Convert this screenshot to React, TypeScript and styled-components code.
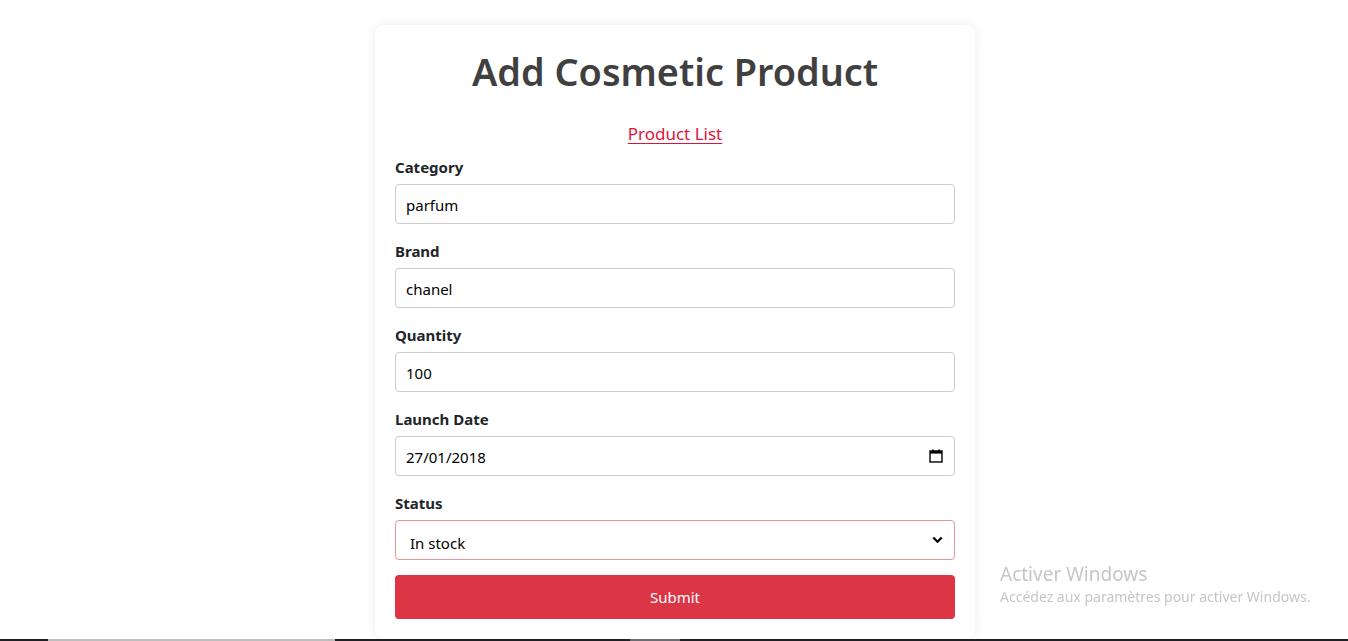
import styled, { createGlobalStyle } from "styled-components";

const GlobalStyle = createGlobalStyle`
  html, body {
    margin: 0;
    padding: 0;
    background: #ffffff;
    font-family: "Noto Sans", "Open Sans", Arial, sans-serif;
    color: #212529;
  }
  * { box-sizing: border-box; }
`;

const Page = styled.div`
  min-height: 641px;
  display: flex;
  justify-content: center;
  align-items: flex-start;
  padding: 25px 0 0 2px;
`;

const Card = styled.form`
  width: 600px;
  background: #fff;
  border-radius: 9px;
  box-shadow: 0 0 12px rgba(0, 0, 0, 0.08);
  padding: 20px 20px 20px;
  display: flex;
  flex-direction: column;
`;

const Title = styled.h1`
  margin: 0;
  text-align: center;
  font-size: 37.8px;
  line-height: 54px;
  font-weight: 600;
  color: #404040;
`;

const LinkRow = styled.div`
  text-align: center;
  margin-top: 21px;
  line-height: 27px;
`;

const ListLink = styled.a`
  color: #dc143c;
  font-size: 17px;
  text-decoration: underline;
  text-underline-offset: 3px;
`;

const Field = styled.div<{ $first?: boolean }>`
  display: flex;
  flex-direction: column;
  gap: 5px;
  margin-top: ${({ $first }) => ($first ? "7px" : "15px")};
`;

const Label = styled.label`
  font-size: 15px;
  line-height: 24px;
  font-weight: 700;
  color: #212529;
`;

const Input = styled.input`
  width: 100%;
  height: 40px;
  border: 1px solid #ccc;
  border-radius: 4px;
  padding: 2px 10px 0;
  font-family: inherit;
  font-size: 15px;
  color: #000;
  background: #fff;
  outline: none;
`;

const Control = styled.div`
  position: relative;
`;

const SideIcon = styled.span`
  position: absolute;
  right: 12px;
  top: 50%;
  transform: translateY(-50%);
  display: flex;
  pointer-events: none;
  color: #000;
`;

const Select = styled.select`
  width: 100%;
  height: 40px;
  border: 1px solid #e8959b;
  border-radius: 4px;
  padding: 5px 14px 0;
  font-family: inherit;
  font-size: 15px;
  color: #000;
  background: #fff;
  appearance: none;
  outline: none;
`;

const Submit = styled.button`
  margin-top: 15px;
  height: 44px;
  width: 100%;
  border: none;
  border-radius: 4px;
  background: #dc3545;
  color: #fff;
  font-family: inherit;
  font-size: 15px;
`;

const Watermark = styled.div`
  position: fixed;
  left: 1000px;
  top: 561px;
  color: #c6c6c6;
  font-family: "Noto Sans", "Open Sans", sans-serif;
  pointer-events: none;
`;

const WmTitle = styled.div`
  font-size: 19px;
  line-height: 26px;
`;

const WmText = styled.div`
  font-size: 14px;
  line-height: 19px;
`;

const Taskbar = styled.div`
  position: fixed;
  left: 0;
  right: 0;
  bottom: 0;
  height: 2px;
  background: linear-gradient(
    90deg,
    #202024 0 48px,
    #bdbdbd 48px 335px,
    #202024 335px 630px,
    #6b6b70 630px 680px,
    #202024 680px
  );
`;

const fields = [
  { id: "category", label: "Category", value: "parfum" },
  { id: "brand", label: "Brand", value: "chanel" },
  { id: "quantity", label: "Quantity", value: "100" },
];

export default function App() {
  return (
    <>
      <GlobalStyle />
      <Page>
        <Card onSubmit={(e) => e.preventDefault()}>
          <Title>Add Cosmetic Product</Title>
          <LinkRow>
            <ListLink href="#">Product List</ListLink>
          </LinkRow>

          {fields.map((f, i) => (
            <Field key={f.id} $first={i === 0}>
              <Label htmlFor={f.id}>{f.label}</Label>
              <Input id={f.id} defaultValue={f.value} />
            </Field>
          ))}

          <Field>
            <Label htmlFor="launch">Launch Date</Label>
            <Control>
              <Input id="launch" defaultValue="27/01/2018" />
              <SideIcon>
                <svg width="14" height="14" viewBox="0 0 14 14" aria-hidden="true">
                  <rect x="1" y="2" width="12" height="11" fill="none" stroke="#000" strokeWidth="1.4" />
                  <rect x="1" y="2" width="12" height="2.6" fill="#000" />
                  <rect x="3.2" y="0.5" width="1.6" height="2.5" fill="#000" />
                  <rect x="9.2" y="0.5" width="1.6" height="2.5" fill="#000" />
                </svg>
              </SideIcon>
            </Control>
          </Field>

          <Field>
            <Label htmlFor="status">Status</Label>
            <Control>
              <Select id="status" defaultValue="in">
                <option value="in">In stock</option>
                <option value="out">Out of stock</option>
              </Select>
              <SideIcon>
                <svg width="11" height="8" viewBox="0 0 11 8" aria-hidden="true">
                  <path d="M1.3 1.5 L5.5 5.7 L9.7 1.5" fill="none" stroke="#000" strokeWidth="2.2" />
                </svg>
              </SideIcon>
            </Control>
          </Field>

          <Submit type="submit">Submit</Submit>
        </Card>
      </Page>
      <Watermark>
        <WmTitle>Activer Windows</WmTitle>
        <WmText>Accédez aux paramètres pour activer Windows.</WmText>
      </Watermark>
      <Taskbar />
    </>
  );
}
